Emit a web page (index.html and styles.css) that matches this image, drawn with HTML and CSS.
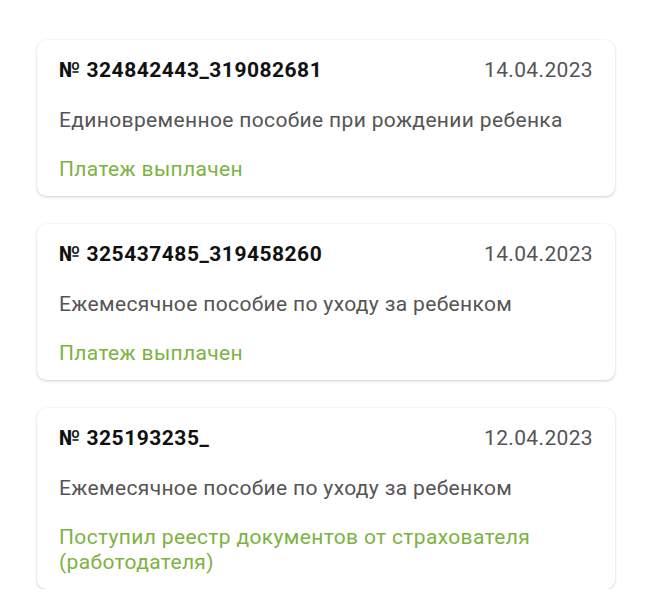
FILE: index.html
```html
<!DOCTYPE html>
<html lang="ru">
<head>
<meta charset="utf-8">
<link rel="stylesheet" href="styles.css">
</head>
<body>
<div class="list">
  <div class="card">
    <div class="head"><span class="num">№ 324842443_319082681</span><span class="date">14.04.2023</span></div>
    <div class="desc">Единовременное пособие при рождении ребенка</div>
    <div class="status">Платеж выплачен</div>
  </div>
  <div class="card">
    <div class="head"><span class="num">№ 325437485_319458260</span><span class="date">14.04.2023</span></div>
    <div class="desc">Ежемесячное пособие по уходу за ребенком</div>
    <div class="status">Платеж выплачен</div>
  </div>
  <div class="card">
    <div class="head"><span class="num">№ 325193235_</span><span class="date">12.04.2023</span></div>
    <div class="desc">Ежемесячное пособие по уходу за ребенком</div>
    <div class="status">Поступил реестр документов от страхователя (работодателя)</div>
  </div>
</div>
</body>
</html>
```
FILE: styles.css
```css
html, body {
  margin: 0;
  padding: 0;
  background: #ffffff;
}
body {
  font-family: Roboto, "Noto Sans", sans-serif;
  font-size: 21px;
  line-height: 25px;
  letter-spacing: 0.35px;
}
.list {
  display: flex;
  flex-direction: column;
  gap: 28px;
  padding: 40px 36px 0 37px;
}
.card {
  display: flex;
  flex-direction: column;
  gap: 24.4px;
  padding: 18.3px 22px 14px 22px;
  background: #fff;
  border-radius: 9px;
  box-shadow: 0 1px 3px rgba(0,0,0,0.18), 0 0 1px rgba(0,0,0,0.08);
}
.head {
  display: flex;
  justify-content: space-between;
}
.num {
  font-weight: 700;
  color: #111;
  letter-spacing: 0.5px;
}
.date {
  color: #555;
}
.desc {
  color: #555;
}
.status {
  color: #7cb342;
}
```
